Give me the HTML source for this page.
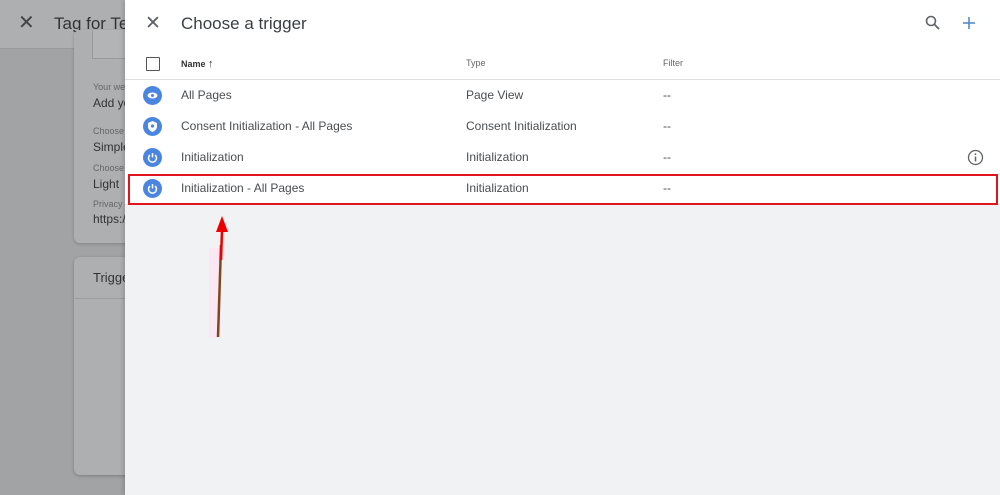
<!DOCTYPE html>
<html><head><style>
body{margin:0;width:1000px;height:495px;overflow:hidden;font-family:"Liberation Sans",sans-serif;background:#a2a3a5;position:relative}
.abs{position:absolute}
.row{position:absolute;left:125px;width:875px;height:31px;border-bottom:1px solid #e6e6e6;background:#fff}
.ic{position:absolute;left:18px;top:6px;width:19px;height:19px;border-radius:50%;background:#4a86e0}
.nm{position:absolute;left:56px;top:8px;font-size:12px;color:#4a4d50}
.ty{position:absolute;left:341px;top:8px;font-size:12px;color:#4a4d50}
.fl{position:absolute;left:538px;top:8px;font-size:12px;color:#4a4d50}
</style></head><body>
<div class="abs" style="left:0;top:0;width:125px;height:48px;background:#aeafb1;border-bottom:1px solid #999"></div>
<div class="abs" style="left:18px;top:10px;font-size:20px;color:#444">✕</div>
<div class="abs" style="left:54px;top:14px;font-size:17px;color:#333">Tag for Ter</div>
<div class="abs" style="left:74px;top:30px;width:60px;height:213px;background:#aeafb1;border-radius:6px;box-shadow:0 1px 3px rgba(0,0,0,.2)"></div>
<div class="abs" style="left:92px;top:30px;width:40px;height:28px;border:1px solid #999;border-top:none;background:#b3b4b6"></div>
<div class="abs" style="left:93px;top:82px;font-size:9px;color:#666">Your we</div>
<div class="abs" style="left:93px;top:96px;font-size:12px;color:#333">Add yo</div>
<div class="abs" style="left:93px;top:126px;font-size:9px;color:#666">Choose</div>
<div class="abs" style="left:93px;top:140px;font-size:12px;color:#333">Simple</div>
<div class="abs" style="left:93px;top:163px;font-size:9px;color:#666">Choose</div>
<div class="abs" style="left:93px;top:177px;font-size:12px;color:#333">Light</div>
<div class="abs" style="left:93px;top:199px;font-size:9px;color:#666">Privacy</div>
<div class="abs" style="left:93px;top:212px;font-size:12px;color:#333">https:/</div>
<div class="abs" style="left:74px;top:257px;width:60px;height:218px;background:#aeafb1;border-radius:6px;box-shadow:0 1px 3px rgba(0,0,0,.25)"></div>
<div class="abs" style="left:74px;top:298px;width:60px;height:1px;background:#9d9ea0"></div>
<div class="abs" style="left:93px;top:270px;font-size:13px;color:#333">Trigge</div>

<div class="abs" style="left:125px;top:0;width:875px;height:495px;background:#f1f2f4;box-shadow:-2px 0 4px rgba(0,0,0,.15)"></div>
<div class="abs" style="left:125px;top:0;width:875px;height:79px;background:#fff;border-bottom:1px solid #e0e0e0"></div>
<div class="abs" style="left:145px;top:12px;font-size:19px;color:#5f6368">✕</div>
<div class="abs" style="left:181px;top:14px;font-size:17px;color:#3c4043">Choose a trigger</div>
<svg class="abs" style="left:924px;top:14px" width="18" height="18" viewBox="0 0 18 18"><circle cx="7" cy="7" r="4.5" fill="none" stroke="#5f6368" stroke-width="1.6"/><path d="M10.5 10.5L15 15" stroke="#5f6368" stroke-width="1.8"/></svg>
<svg class="abs" style="left:961px;top:15px" width="16" height="16"><path d="M8 2V14M2 8H14" stroke="#4a86c8" stroke-width="1.5"/></svg>
<div class="abs" style="left:146px;top:57px;width:12px;height:12px;border:1.5px solid #555;border-radius:1px"></div>
<div class="abs" style="left:181px;top:58px;font-size:9px;color:#333;font-weight:bold">Name <span style="font-size:11px">↑</span></div>
<div class="abs" style="left:466px;top:58px;font-size:9px;color:#666">Type</div>
<div class="abs" style="left:663px;top:58px;font-size:9px;color:#666">Filter</div>

<div class="row" style="top:80px"><div class="ic"><svg width="19" height="19"><ellipse cx="9.5" cy="9.5" rx="5" ry="3" fill="#fff"/><circle cx="9.5" cy="9.5" r="1.5" fill="#4a86e0"/></svg></div><div class="nm">All Pages</div><div class="ty">Page View</div><div class="fl">--</div></div>
<div class="row" style="top:111px"><div class="ic"><svg width="19" height="19"><path d="M9.5 4L14 6V9.5C14 12 12 14 9.5 15C7 14 5 12 5 9.5V6Z" fill="#fff"/><circle cx="9.5" cy="9" r="1.6" fill="#4a86e0"/></svg></div><div class="nm">Consent Initialization - All Pages</div><div class="ty">Consent Initialization</div><div class="fl">--</div></div>
<div class="row" style="top:142px"><div class="ic"><svg width="19" height="19"><path d="M7 7A4 4 0 1 0 12 7" fill="none" stroke="#fff" stroke-width="1.5"/><path d="M9.5 5V9.5" stroke="#fff" stroke-width="1.5"/></svg></div><div class="nm">Initialization</div><div class="ty">Initialization</div><div class="fl">--</div>
<svg class="abs" style="left:842px;top:7px" width="17" height="17"><circle cx="8.5" cy="8.5" r="7" fill="none" stroke="#5f6368" stroke-width="1.3"/><path d="M8.5 7.5V12.5" stroke="#5f6368" stroke-width="1.5"/><circle cx="8.5" cy="5.2" r="0.9" fill="#5f6368"/></svg></div>
<div class="row" style="top:173px"><div class="ic"><svg width="19" height="19"><path d="M7 7A4 4 0 1 0 12 7" fill="none" stroke="#fff" stroke-width="1.5"/><path d="M9.5 5V9.5" stroke="#fff" stroke-width="1.5"/></svg></div><div class="nm">Initialization - All Pages</div><div class="ty">Initialization</div><div class="fl">--</div></div>
<div class="abs" style="left:128px;top:174px;width:866px;height:27px;border:2.5px solid #e1131b"></div>

<div class="abs" style="left:209px;top:248px;width:12px;height:90px;background:#fbe6f3"></div>
<svg class="abs" style="left:200px;top:210px" width="40" height="135"><path d="M18 127L21 35" stroke="#7a4a1c" stroke-width="2.5"/><path d="M21 50L22 20" stroke="#e00" stroke-width="2.5"/><path d="M16 22L22 6L28 22Z" fill="#e00"/></svg>
</body></html>
